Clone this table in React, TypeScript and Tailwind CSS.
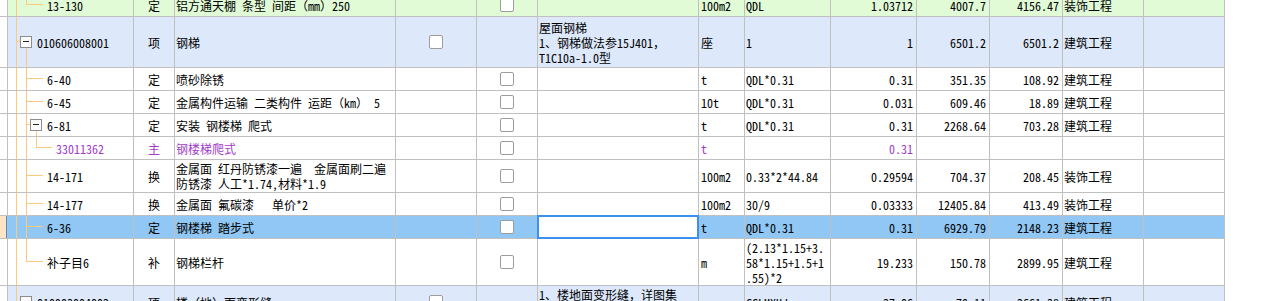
import React from "react";

type TreeKind = "r0" | "item" | "leaf" | "leafBox" | "sub" | "last" | "lastLeaf";

const LINE = "#fdc97c";

function Tree({ kind, h }: { kind: TreeKind; h: number }) {
  const cy = Math.floor(h / 2) - 1;
  const y = cy + 0.5;
  const els: React.ReactNode[] = [];
  els.push(<line key="a" x1={8.5} y1={0} x2={8.5} y2={h} stroke={LINE} strokeWidth={1} />);
  const box = (x: number, k: string) => (
    <g key={k}>
      <rect x={x + 0.5} y={cy - 5 + 0.5} width={11} height={11} fill="#fbfbfb" stroke="#8d8d8d" strokeWidth={1} />
      <line x1={x + 3} y1={y} x2={x + 9} y2={y} stroke="#222" strokeWidth={1} />
    </g>
  );
  if (kind === "r0") {
    els.push(<line key="b" x1={18.5} y1={0} x2={18.5} y2={y} stroke={LINE} />);
    els.push(<line key="hh" x1={18} y1={y} x2={35} y2={y} stroke={LINE} />);
  } else if (kind === "item") {
    els.push(<line key="hh" x1={8} y1={y} x2={12} y2={y} stroke={LINE} />);
    els.push(<line key="b" x1={18.5} y1={cy + 6} x2={18.5} y2={h} stroke={LINE} />);
    els.push(box(12, "box"));
  } else if (kind === "last") {
    els.push(<line key="hh" x1={8} y1={y} x2={12} y2={y} stroke={LINE} />);
    els.push(box(12, "box"));
  } else if (kind === "leaf") {
    els.push(<line key="b" x1={18.5} y1={0} x2={18.5} y2={h} stroke={LINE} />);
    els.push(<line key="hh" x1={18} y1={y} x2={35} y2={y} stroke={LINE} />);
  } else if (kind === "leafBox") {
    els.push(<line key="b" x1={18.5} y1={0} x2={18.5} y2={h} stroke={LINE} />);
    els.push(<line key="hh" x1={18} y1={y} x2={22} y2={y} stroke={LINE} />);
    els.push(<line key="c" x1={28.5} y1={cy + 6} x2={28.5} y2={h} stroke={LINE} />);
    els.push(box(22, "box"));
  } else if (kind === "sub") {
    els.push(<line key="b" x1={18.5} y1={0} x2={18.5} y2={h} stroke={LINE} />);
    els.push(<line key="c" x1={28.5} y1={0} x2={28.5} y2={y} stroke={LINE} />);
    els.push(<line key="hh" x1={28} y1={y} x2={44} y2={y} stroke={LINE} />);
  } else if (kind === "lastLeaf") {
    els.push(<line key="b" x1={18.5} y1={0} x2={18.5} y2={y} stroke={LINE} />);
    els.push(<line key="hh" x1={18} y1={y} x2={35} y2={y} stroke={LINE} />);
  }
  return (
    <svg className="absolute left-0 top-0" width={125} height={h} shapeRendering="crispEdges">
      {els}
    </svg>
  );
}

function F({ children }: { children: React.ReactNode }) {
  return <span className="[font-feature-settings:normal]">{children}</span>;
}

type Row = {
  h: string;
  ch: number;
  bg: string;
  tree: TreeKind;
  code: string;
  pl: string;
  type: string;
  name: React.ReactNode;
  cb: 4 | 5;
  desc?: React.ReactNode;
  unit: string;
  formula: React.ReactNode;
  qty: string;
  price: string;
  total: string;
  cat: string;
  purple?: boolean;
  sel?: boolean;
};

const rows: Row[] = [
  {
    h: "h-[23px]", ch: 22, bg: "bg-[#e1fbd7]", tree: "r0", code: "13-130", pl: "pl-[39px]", type: "定",
    name: (<>铝方通天棚 条型 间距<F>（</F>mm<F>）</F>250</>), cb: 5, unit: "100m2", formula: "QDL", qty: "1.03712", price: "4007.7", total: "4156.47", cat: "装饰工程",
  },
  {
    h: "h-[51px]", ch: 50, bg: "bg-[#dde9fb]", tree: "item", code: "010606008001", pl: "pl-[29px]", type: "项",
    name: "钢梯", cb: 4,
    desc: (<>屋面钢梯<br />1、钢梯做法参15J401<F>，</F><br />T1C10a-1.0型</>),
    unit: "座", formula: "1", qty: "1", price: "6501.2", total: "6501.2", cat: "建筑工程",
  },
  {
    h: "h-[23px]", ch: 22, bg: "bg-white", tree: "leaf", code: "6-40", pl: "pl-[39px]", type: "定",
    name: "喷砂除锈", cb: 5, unit: "t", formula: "QDL*0.31", qty: "0.31", price: "351.35", total: "108.92", cat: "建筑工程",
  },
  {
    h: "h-[23px]", ch: 22, bg: "bg-white", tree: "leaf", code: "6-45", pl: "pl-[39px]", type: "定",
    name: (<>金属构件运输 二类构件 运距<F>（</F>km<F>）</F> 5</>), cb: 5, unit: "10t", formula: "QDL*0.31", qty: "0.031", price: "609.46", total: "18.89", cat: "建筑工程",
  },
  {
    h: "h-[23px]", ch: 22, bg: "bg-white", tree: "leafBox", code: "6-81", pl: "pl-[39px]", type: "定",
    name: "安装 钢楼梯 爬式", cb: 5, unit: "t", formula: "QDL*0.31", qty: "0.31", price: "2268.64", total: "703.28", cat: "建筑工程",
  },
  {
    h: "h-[23px]", ch: 22, bg: "bg-white", tree: "sub", code: "33011362", pl: "pl-[48px]", type: "主",
    name: "钢楼梯爬式", cb: 5, unit: "t", formula: "", qty: "0.31", price: "", total: "", cat: "", purple: true,
  },
  {
    h: "h-[33px]", ch: 32, bg: "bg-white", tree: "leaf", code: "14-171", pl: "pl-[39px]", type: "换",
    name: (<>金属面 红丹防锈漆一遍&nbsp;&nbsp;金属面刷二遍<br />防锈漆 人工*1.74,材料*1.9</>),
    cb: 5, unit: "100m2", formula: "0.33*2*44.84", qty: "0.29594", price: "704.37", total: "208.45", cat: "装饰工程",
  },
  {
    h: "h-[23px]", ch: 22, bg: "bg-white", tree: "leaf", code: "14-177", pl: "pl-[39px]", type: "换",
    name: (<>金属面 氟碳漆&nbsp;&nbsp;&nbsp;单价*2</>), cb: 5, unit: "100m2", formula: "30/9", qty: "0.03333", price: "12405.84", total: "413.49", cat: "装饰工程",
  },
  {
    h: "h-[23px]", ch: 22, bg: "bg-[#91c7f4]", tree: "leaf", code: "6-36", pl: "pl-[39px]", type: "定",
    name: "钢楼梯 踏步式", cb: 5, unit: "t", formula: "QDL*0.31", qty: "0.31", price: "6929.79", total: "2148.23", cat: "建筑工程", sel: true,
  },
  {
    h: "h-[47px]", ch: 46, bg: "bg-white", tree: "lastLeaf", code: "补子目6", pl: "pl-[39px]", type: "补",
    name: "钢梯栏杆", cb: 5, unit: "m",
    formula: (<>(2.13*1.15+3.<br />58*1.15+1.5+1<br />.55)*2</>),
    qty: "19.233", price: "150.78", total: "2899.95", cat: "建筑工程",
  },
  {
    h: "h-[33px]", ch: 32, bg: "bg-[#dde9fb]", tree: "last", code: "010903004002", pl: "pl-[29px]", type: "项",
    name: (<>楼<F>（</F>地<F>）</F>面变形缝</>), cb: 4,
    desc: (<>1、楼地面变形缝<F>，</F>详图集<br />L13J9-1</>),
    unit: "m", formula: "CCLMXHJ", qty: "37.06", price: "70.11", total: "2661.38", cat: "建筑工程",
  },
];

const C = "border-r border-b border-[#c0c0c0] flex items-center overflow-hidden relative";

function Check() {
  return <span className="block w-[14px] h-[14px] border border-[#9c9c9c] rounded-[2px] bg-white" />;
}

export default function App() {
  return (
    <div className="w-[1267px] h-[301px] overflow-hidden bg-white text-[12px] leading-[15px] text-black font-['Noto_Sans_CJK_SC','Noto_Sans_CJK_JP',sans-serif] [font-feature-settings:'hwid'] whitespace-nowrap">
      <div className="-mt-[6px] flex flex-col w-[1225px]">
        {rows.map((r, i) => {
          const tc = r.purple ? "text-[#a23ccc]" : "";
          return (
            <div key={i} className={`grid grid-cols-[8px_126px_41px_221px_81px_61px_161px_46px_86px_86px_73px_73px_81px_81px] ${r.h} ${r.bg} ${tc}`}>
              <div className={`${C} ${r.sel ? "bg-[#fde5c6] shadow-[inset_-1px_0_0_#3b8ee8]" : "bg-white"}`} />
              <div className={`${C} ${r.pl}`}>
                <Tree kind={r.tree} h={r.ch} />
                <span className="relative">{r.code}</span>
              </div>
              <div className={`${C} justify-center`}>{r.type}</div>
              <div className={`${C} pl-[1px]`}>
                <div>{r.name}</div>
              </div>
              <div className={`${C} justify-center`}>{r.cb === 4 ? <Check /> : null}</div>
              <div className={`${C} justify-center`}>{r.cb === 5 ? <Check /> : null}</div>
              <div className={`${C} pl-[1px] ${r.sel ? "bg-white overflow-visible" : ""}`}>
                {r.sel ? (
                  <span className="absolute -left-px -top-px -right-px -bottom-px border-2 border-[#3d8ff2] z-10" />
                ) : null}
                <div>{r.desc}</div>
              </div>
              <div className={`${C} pl-[2px]`}>{r.unit}</div>
              <div className={`${C} pl-[1px]`}>
                <div>{r.formula}</div>
              </div>
              <div className={`${C} justify-end pr-[3px]`}>{r.qty}</div>
              <div className={`${C} justify-end pr-[3px]`}>{r.price}</div>
              <div className={`${C} justify-end pr-[3px]`}>{r.total}</div>
              <div className={`${C} pl-[1px]`}>{r.cat}</div>
              <div className={`${C}`} />
            </div>
          );
        })}
      </div>
    </div>
  );
}
